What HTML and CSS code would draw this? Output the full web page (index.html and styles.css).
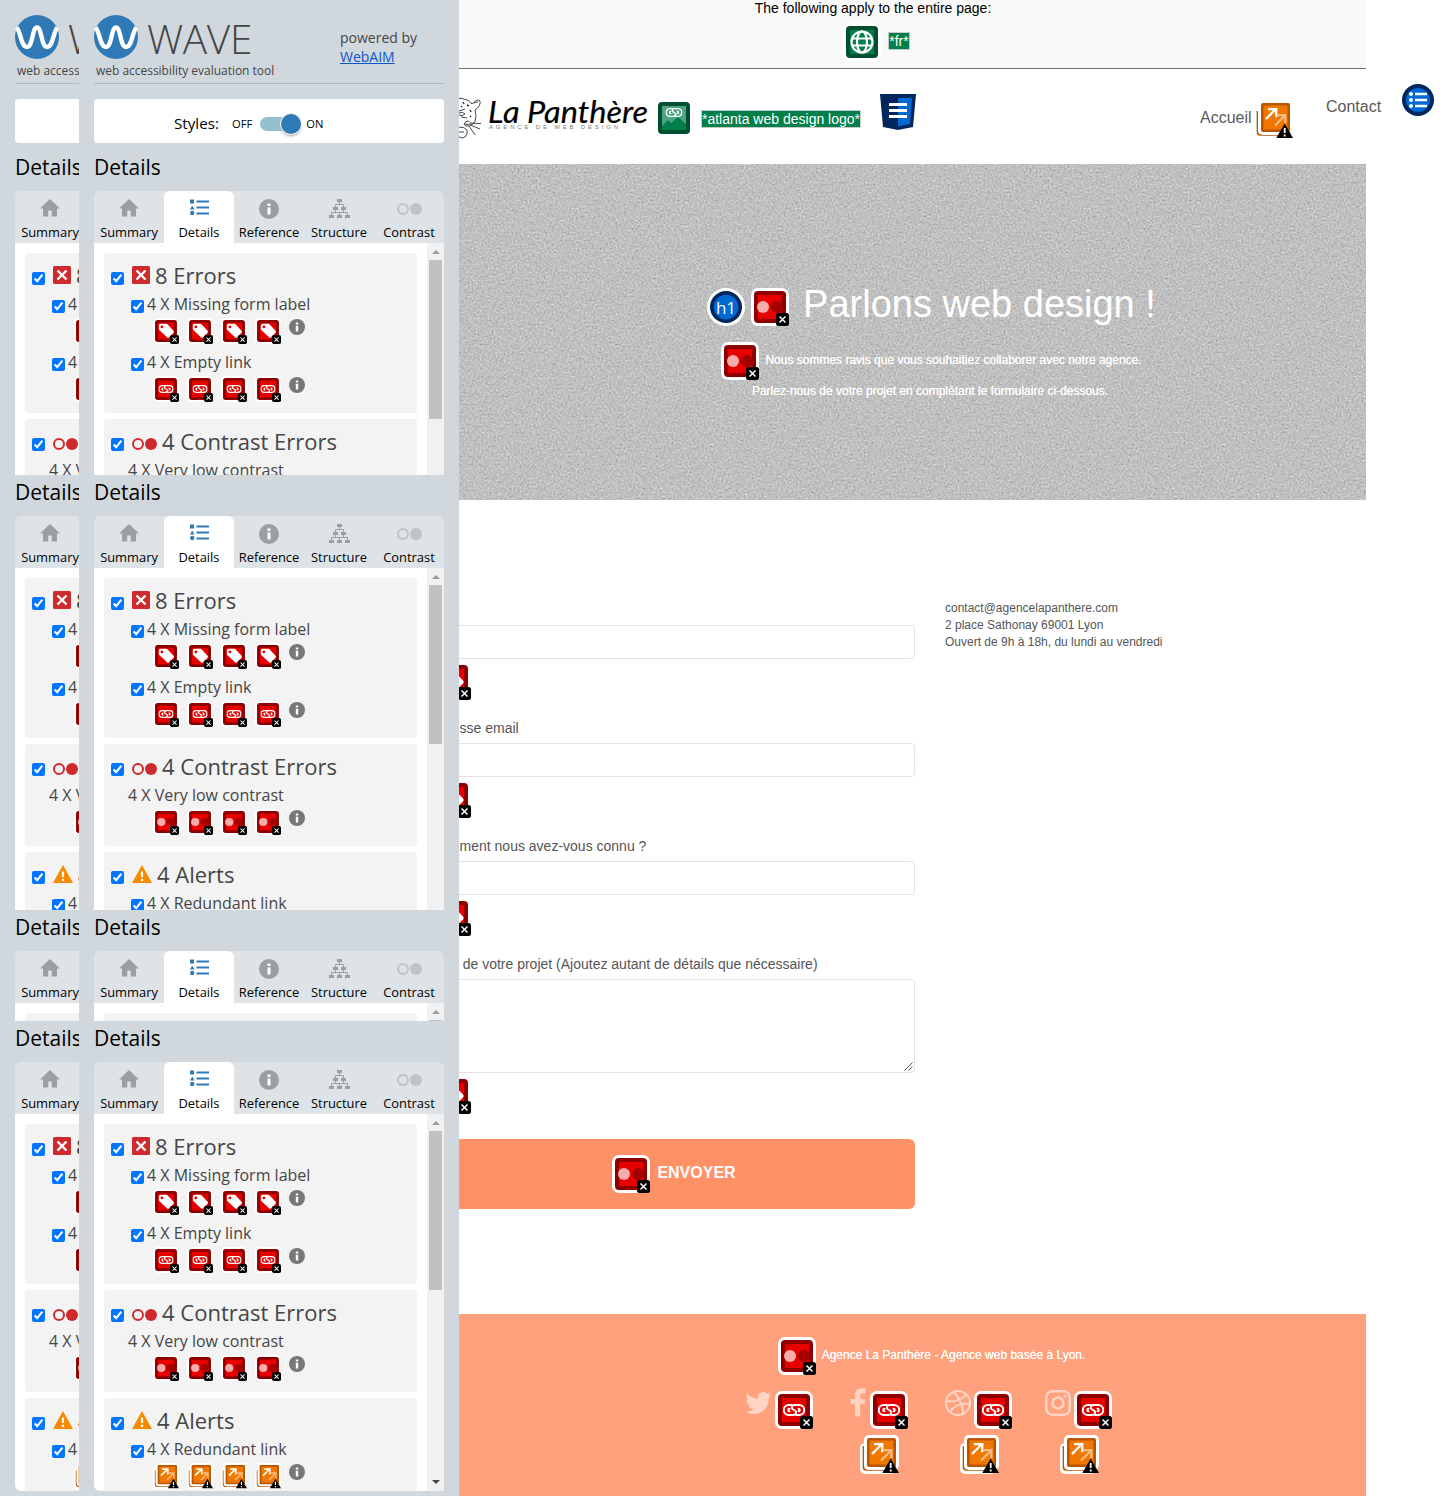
FILE: index.html
```html
<!DOCTYPE html>
<html lang="fr">
<head>
<meta charset="utf-8">
<title>La Panthère - Contact</title>
<link rel="stylesheet" href="styles.css">
</head>
<body>
<svg class="sprite" xmlns="http://www.w3.org/2000/svg">
  <symbol id="badge" viewBox="0 0 38 38">
    <rect x="25" y="25" width="13" height="13" rx="2.5" fill="#000"/>
    <path d="M28.5 28.5l6 6M34.5 28.5l-6 6" stroke="#fff" stroke-width="1.5"/>
  </symbol>
  <symbol id="red" viewBox="0 0 38 38">
    <rect width="38" height="38" rx="7" fill="#fff"/>
    <rect x="3" y="3" width="32" height="32" rx="4" fill="#8e0000"/>
    <rect x="7" y="7" width="24" height="24" fill="#e60000"/>
  </symbol>
  <symbol id="contrast" viewBox="0 0 38 38">
    <use href="#red"/>
    <circle cx="12" cy="19" r="6" fill="#f8abab"/><circle cx="26" cy="19" r="6" fill="#a40000"/>
    <use href="#badge"/>
  </symbol>
  <symbol id="chain" viewBox="0 0 22 14">
    <path d="M9 2H5.800a5 5 0 0 0 0 10H10.500a2.500 2.500 0 0 0 1.800-4.300L9.700 6.300A2.500 2.500 0 0 1 11.500 2H16.200a5 5 0 0 1 0 10H13M6.500 8.300a1.300 1.300 0 0 1 0-2.600M15.500 5.700a1.300 1.300 0 0 1 0 2.600" fill="none" stroke="#fff" stroke-width="1.900" stroke-linecap="round"/>
  </symbol>
  <symbol id="emptylink" viewBox="0 0 38 38">
    <use href="#red"/><use href="#chain" x="8" y="12" width="22" height="14"/><use href="#badge"/>
  </symbol>
  <symbol id="label" viewBox="0 0 38 38">
    <use href="#red"/>
    <path d="M8.500 11.500a3 3 0 0 1 3-3h7.500q1.500 0 2.500 1L30 18.500q1.500 1.500 0 3L23.500 28q-1.500 1.500-3 0L9.500 18q-1-1-1-2.500z" fill="#fff"/>
    <circle cx="13" cy="13" r="2" fill="#e60000"/><use href="#badge"/>
  </symbol>
  <symbol id="redundant" viewBox="0 0 39 39">
    <rect y="8" width="36" height="31" rx="5" fill="#fff"/>
    <path d="M3.500 11v21q0 3 3 3H31" fill="none" stroke="#b85600" stroke-width="1.700"/>
    <rect x="4" width="35" height="35" rx="5" fill="#fff"/>
    <path d="M5 5v25q0 4 4 4h20" fill="none" stroke="#fff" stroke-width="1"/>
    <rect x="7" y="3" width="29" height="29" rx="2" fill="#b85600"/>
    <rect x="9.500" y="5.500" width="24" height="24" fill="#f07800"/>
    <path d="M12 19l9.500-9.500M14 9.200h8.300v8" fill="none" stroke="#fff" stroke-width="2.300"/>
    <path d="M21 25.500l9.500-9.500M23 15.200h8.300v8" fill="none" stroke="#f8b980" stroke-width="2.300"/>
    <path d="M30.700 23.500L39 38H22.300z" fill="#000"/><path d="M30.700 28v5M30.700 34.500v2" stroke="#fff" stroke-width="1.800"/>
  </symbol>
  <symbol id="logo" viewBox="0 0 44 44">
    <circle cx="22" cy="22" r="22" fill="#2f79b7"/>
    <path d="M1.800 12.500C6 18 6 32 12 32S17 12.500 22 12.500s4 19.500 10 19.500S38 18 42.200 12.500" fill="none" stroke="#fff" stroke-width="4.400"/>
  </symbol>
  <symbol id="home" viewBox="0 0 20 18"><path d="M10 0L20 9.500h-3V17.500h-5.200V11.500H8.200v6H3v-8H0z" fill="#9b9fa1"/></symbol>
  <symbol id="list" viewBox="0 0 19 17">
    <path d="M0 .5h4v4H0zM2.200 6.500l2.300 4H0z" fill="#2f79b7"/>
    <path d="M6.500 2.500H19M6.500 8.500H19M6.500 14.500H19" stroke="#2f79b7" stroke-width="2"/><circle cx="2.200" cy="14" r="2.200" fill="#2f79b7"/>
  </symbol>
  <symbol id="info" viewBox="0 0 20 20"><circle cx="10" cy="10" r="10" fill="currentColor"/><path d="M8.500 4.500h3v2.500h-3zM8.500 8.500h3V15.500h-3z" fill="#fff"/></symbol>
  <symbol id="tree" viewBox="0 0 21 19">
    <path d="M8 0h5v3H8zM4 8h5v3H4zM12 8h5v3h-5zM0 16h5v3H0zM8 16h5v3H8zM16 16h5v3h-5z" fill="#9b9fa1"/>
    <path d="M10.500 3v2.500M6.500 8V5.500h8V8M6.500 11v2.500M14.500 11v2.500M2.500 16v-2.500h16V16M10.500 16v-2.500" fill="none" stroke="#9b9fa1"/>
  </symbol>
  <symbol id="pair" viewBox="0 0 25 12"><circle cx="6" cy="6" r="5" fill="none" stroke="currentColor" stroke-width="2"/><circle cx="19" cy="6" r="6" fill="currentColor"/></symbol>
  <symbol id="error" viewBox="0 0 18 18"><rect width="18" height="18" rx="1.500" fill="#ce2a2d"/><path d="M4.500 4.500l9 9M13.500 4.500l-9 9" stroke="#fff" stroke-width="2.400"/></symbol>
  <symbol id="alert" viewBox="0 0 20 18"><path d="M10 0l10 18H0z" fill="#f88a00"/><path d="M10 6.500V12M10 13.800v2.200" stroke="#fff" stroke-width="2.200"/></symbol>
</svg>

<template id="report">
  <h2 class="title">Details</h2>
  <div class="tabs">
    <div class="tab home"><span><svg width="20" height="18"><use href="#home"/></svg></span>Summary</div>
    <div class="tab on"><span><svg width="19" height="17"><use href="#list"/></svg></span>Details</div>
    <div class="tab"><span><svg width="20" height="20"><use href="#info"/></svg></span>Reference</div>
    <div class="tab"><span><svg width="21" height="19"><use href="#tree"/></svg></span>Structure</div>
    <div class="tab pale"><span><svg width="25" height="12"><use href="#pair"/></svg></span>Contrast</div>
  </div>
  <div class="pane">
    <div class="groups">
      <section class="card">
        <h3><input type="checkbox" checked><svg width="18" height="18"><use href="#error"/></svg><span>8 Errors</span></h3>
        <div class="item" data-icon="label"><label><input type="checkbox" checked>4 X Missing form label</label></div>
        <div class="item" data-icon="emptylink"><label><input type="checkbox" checked>4 X Empty link</label></div>
      </section>
      <section class="card">
        <h3><input type="checkbox" checked><svg class="crimson" width="25" height="12"><use href="#pair"/></svg><span>4 Contrast Errors</span></h3>
        <div class="item" data-icon="contrast"><label class="plain">4 X Very low contrast</label></div>
      </section>
      <section class="card">
        <h3><input type="checkbox" checked><svg class="warn" width="20" height="18"><use href="#alert"/></svg><span>4 Alerts</span></h3>
        <div class="item" data-icon="redundant"><label><input type="checkbox" checked>4 X Redundant link</label></div>
      </section>
    </div>
    <div class="scroll"><i class="up"></i><i class="thumb"></i><i class="down"></i></div>
  </div>
</template>

<template id="masthead">
  <header class="brand">
    <div>
      <div class="wordmark"><svg width="44" height="44"><use href="#logo"/></svg><span>WAVE</span></div>
      <p class="tagline">web accessibility evaluation tool</p>
    </div>
    <p class="powered">powered by<br><a href="#">WebAIM</a></p>
  </header>
  <div class="styles"><b>Styles:</b><span>OFF</span><i class="switch"></i><span>ON</span></div>
</template>

<div class="screen">
  <aside class="side cut"></aside>
  <aside class="side"></aside>

  <main class="page">
    <div class="notice">
      <p>The following apply to the entire page:</p>
      <div class="notice-row">
        <svg width="38" height="38" viewBox="0 0 38 38"><rect width="38" height="38" rx="7" fill="#fff"/><rect x="3" y="3" width="32" height="32" rx="4" fill="#00502d"/><rect x="7" y="7" width="24" height="24" fill="#007f4b"/><g fill="none" stroke="#fff" stroke-width="2.200"><circle cx="19" cy="19" r="10.500"/><ellipse cx="19" cy="19" rx="5" ry="10.500"/><path d="M10 15.500h18M10 22.500h18"/></g></svg>
        <span class="alt">*fr*</span>
      </div>
    </div>

    <nav class="nav">
      <svg class="brandmark" width="208" height="50" viewBox="0 0 208 50">
        <g fill="none" stroke="#333" stroke-width=".9"><path d="M14 8q6-2 12 1 3 1 5 4 6-6 8-3 1 5-5 9 2 6 0 11-1 4-5 4l-5-1M33 12q3-1 4-1M18 20l6-2M18 22q4-2 6 1-3 3-6 1M20 26l6 1M28 30q-4 0-5 3 1 3 5 2M28 32l12 .5M29 34l10 4M28 35l6 9M18 36q6 0 8 3 1 4-2 7-2 2-6 0M16 41h7"/><path d="M22 11l1 2M26 14l2 1M20 15l1 1M29 19l1 2M29 25l1 1" stroke-width="1.400"/></g>
        <text class="script" x="47" y="32" textLength="160" lengthAdjust="spacingAndGlyphs">La Panthère</text>
        <text class="strap" x="48" y="38" textLength="129">AGENCE DE WEB DESIGN</text>
      </svg>
      <svg class="linked" width="32" height="32" viewBox="0 0 32 32"><rect width="32" height="32" rx="4" fill="#00502d"/><rect x="4" y="4" width="24" height="24" fill="#4da581"/><path d="M4 24l6-6 3 3 7-6 8 7v6H4z" fill="#007f4b"/><use href="#chain" x="7.500" y="5" width="17" height="11"/></svg>
      <span class="alt logo-alt">*atlanta web design logo*</span>
      <svg class="navmark" width="36" height="36" viewBox="0 0 36 36"><path d="M0 0h36l-3 33-15 3-15-3z" fill="#00265c"/><path d="M18 4h14l-2 26-12 2.500z" fill="#0069d2"/><path d="M9 10.500h18M9 16.500h18M9 22.500h18" stroke="#fff" stroke-width="3"/></svg>
      <a class="accueil">Accueil</a>
      <svg class="dup" width="39" height="39"><use href="#redundant"/></svg>
      <a class="contact">Contact</a>
      <svg class="ul" width="32" height="32" viewBox="0 0 32 32"><circle cx="16" cy="16" r="16" fill="#00265c"/><circle cx="16" cy="16" r="12" fill="#0069d2"/><path d="M13 10h12M13 16h12M13 22h12" stroke="#fff" stroke-width="2.500"/><g fill="#fff"><circle cx="9" cy="10" r="2"/><circle cx="9" cy="16" r="2"/><circle cx="9" cy="22" r="2"/></g></svg>
    </nav>

    <section class="hero">
      <svg class="paper" width="986" height="336"><filter id="grain" x="0" y="0" width="100%" height="100%" color-interpolation-filters="sRGB"><feTurbulence type="fractalNoise" baseFrequency=".5" numOctaves="3" seed="4"/><feColorMatrix values=".2 .15 .15 0 .5  .2 .15 .15 0 .5  .2 .15 .15 0 .5  0 0 0 0 1"/></filter><rect width="986" height="336" filter="url(#grain)"/></svg>
      <div class="headline">
        <svg width="38" height="38" viewBox="0 0 38 38"><circle cx="19" cy="19" r="19" fill="#fff"/><circle cx="19" cy="19" r="16" fill="#00265c"/><circle cx="19" cy="19" r="12.300" fill="#0069d2"/><text x="19" y="25.500" text-anchor="middle" class="h1mark">h1</text></svg>
        <svg width="38" height="38"><use href="#contrast"/></svg>
        <h1>Parlons web design !</h1>
      </div>
      <div class="lead"><svg width="38" height="38"><use href="#contrast"/></svg><p>Nous sommes ravis que vous souhaitiez collaborer avec notre agence.</p></div>
      <p class="lead2">Parlez-nous de votre projet en complétant le formulaire ci-dessous.</p>
    </section>

    <section class="body">
      <form class="form">
        <div class="field"><label>Nom</label><div class="box"></div><svg width="38" height="38"><use href="#label"/></svg></div>
        <div class="field"><label>Adresse email</label><div class="box"></div><svg width="38" height="38"><use href="#label"/></svg></div>
        <div class="field"><label>Comment nous avez-vous connu ?</label><div class="box"></div><svg width="38" height="38"><use href="#label"/></svg></div>
        <div class="field tall"><label>Brief de votre projet (Ajoutez autant de détails que nécessaire)</label><div class="box"><svg width="9" height="9" viewBox="0 0 9 9"><path d="M.5 8.500l8-8M4.500 8.500l4-4" stroke="#555" fill="none"/></svg></div><svg width="38" height="38"><use href="#label"/></svg></div>
        <div class="send"><svg width="38" height="38"><use href="#contrast"/></svg><b>ENVOYER</b></div>
      </form>
      <address>contact@agencelapanthere.com<br>2 place Sathonay 69001 Lyon<br>Ouvert de 9h à 18h, du lundi au vendredi</address>
    </section>

    <footer class="foot">
      <div class="credit"><svg width="38" height="38"><use href="#contrast"/></svg><p>Agence La Panthère - Agence web basée à Lyon.</p></div>
      <div class="social">
        <div class="net"><div><svg width="27" height="27" viewBox="0 0 27 27"><path d="M26.500 5.500l-2.800 2.300C24 17 18 24 9.500 24 6 24 3 23 .5 21.500c3 .2 5.700-.6 7.800-2.300-2.600-.2-4.300-1.600-5-3.700h2.300C3 14.700 1.300 12.800 1.300 10l2.400.6C1.500 8.800.8 6 2.200 3.300 5 6.600 8.700 8.600 13.300 8.800 12.500 5 15 2 18.300 2c1.700 0 3 .7 4 1.700l3.300-1.300-2.200 3z" fill="#ffd4c4"/></svg><svg width="38" height="38"><use href="#emptylink"/></svg></div></div>
        <div class="net fb"><div><svg width="16" height="29" viewBox="0 0 16 29"><path d="M15.500.3v5h-3q-2.300 0-2.300 2.200V11h5l-.7 4.700h-4.300V28.500H5V15.700H.5V11H5V7Q5 .2 11.500.2z" fill="#ffd4c4"/></svg><svg width="38" height="38"><use href="#emptylink"/></svg></div><svg width="39" height="39"><use href="#redundant"/></svg></div>
        <div class="net"><div><svg width="26" height="26" viewBox="0 0 26 26"><g fill="none" stroke="#ffd4c4" stroke-width="2"><circle cx="13" cy="13" r="12"/><path d="M9 2q9 10 9 22M1 11.500q14 1 20-7M5 22q6-10 20-8"/></g></svg><svg width="38" height="38"><use href="#emptylink"/></svg></div><svg width="39" height="39"><use href="#redundant"/></svg></div>
        <div class="net"><div><svg width="26" height="26" viewBox="0 0 26 26"><g fill="none" stroke="#ffd4c4" stroke-width="2.500"><rect x="1.300" y="1.300" width="23.400" height="23.400" rx="6"/><circle cx="13" cy="13" r="5.500"/></g><circle cx="20" cy="6" r="1.600" fill="#ffd4c4"/></svg><svg width="38" height="38"><use href="#emptylink"/></svg></div><svg width="39" height="39"><use href="#redundant"/></svg></div>
      </div>
    </footer>
  </main>
</div>
<script src="script.js"></script>
</body>
</html>
```
FILE: styles.css
```css
* { box-sizing: border-box; }
body { margin: 0; background: #fff; overflow: hidden; font-family: "Liberation Sans", Arial, sans-serif; }
p, h1, h2, h3 { margin: 0; font-weight: 400; }
svg { display: block; flex: none; }
.sprite { width: 0; height: 0; position: absolute; }
.screen { display: flex; width: 1445px; height: 1496px; }

/* Report sidebar */
.side { flex: none; width: 380px; height: 1496px; background: #d0d8de; position: relative; z-index: 2; overflow: hidden; font-family: "Open Sans", "Noto Sans", sans-serif; }
.side.cut { width: 79px; }
.strip { width: 380px; padding: 0 15px; overflow: hidden; display: flex; flex-direction: column; }
.strip.first { height: 475px; }
.strip.second { height: 435px; }
.strip.third { height: 111px; }
.strip.last { height: 475px; padding-bottom: 5px; }
.brand { flex: none; height: 84px; padding-top: 15px; border-bottom: 1px solid #b0b9bc; display: flex; justify-content: space-between; color: #454545; }
.wordmark { display: flex; gap: 9px; height: 48px; }
.wordmark span { font-size: 40.500px; font-weight: 300; line-height: 47px; letter-spacing: -.3px; }
.tagline { font-size: 11.960px; line-height: 16px; margin-left: 2px; white-space: nowrap; }
.powered { width: 104px; font-size: 14px; line-height: 19px; padding-top: 13px; }
.powered a { color: #0f55cc; }
.styles { flex: none; height: 44px; margin: 15px 0 7px; padding: 5px 0 0 80px; background: #fff; border-radius: 4px; display: flex; align-items: center; color: #000; }
.styles b { font-weight: 400; font-size: 15.200px; width: 58px; margin-top: -1px; }
.styles span { font-size: 11.200px; }
.switch { width: 41px; height: 14px; border-radius: 7px; background: #92c1cd; margin: 0 5px 0 8px; display: flex; align-items: center; justify-content: flex-end; }
.switch::after { content: ""; width: 20px; height: 20px; border-radius: 50%; background: #2f79b7; box-shadow: 0 0 0 1px #eee, 0 2px 3px #999; }
.title { flex: none; height: 41px; font-size: 21px; line-height: 35px; color: #000; }
.tabs { flex: none; display: flex; height: 52px; background: #dee3e7; border-radius: 6px 6px 0 0; color: #000; font-size: 12.900px; line-height: 18px; text-align: center; }
.tab { width: 70px; color: #000; white-space: nowrap; }
.tab span { height: 32px; padding-top: 3px; display: flex; align-items: center; justify-content: center; color: #9b9fa1; }
.tab.on { background: #fff; border-radius: 6px 6px 0 0; }
.tab.on span { padding-top: 0; }
.tab.home span { padding-top: 2px; }
.pale span { color: #bfc3c6; padding-top: 4px; }
.pane { flex: 0 0 382px; display: flex; background: #fff; overflow: hidden; }
.last .pane { flex-basis: 377px; border-radius: 0 0 0 6px; }
.groups { width: 333px; padding: 10px 10px 0; display: flex; flex-direction: column; gap: 6px; }
.card { flex: none; background: #f3f3f3; border-radius: 4px; padding: 8px 0 4px; color: #454545; }
.card h3 { height: 32px; display: flex; align-items: center; font-size: 22px; line-height: 30px; padding-left: 7px; }
.card h3 span { margin-top: -4px; }
.card h3 svg { margin: -4px 5px 0 8px; }
.card h3 svg.crimson { color: #ce2a2d; margin-top: 2px; }
.card input { appearance: auto; margin: 0; width: 13px; height: 13px; flex: none; }
.card h3 input { margin-top: 3px; }
.item { height: 58px; }
.item label { display: flex; align-items: center; height: 22px; gap: 3px; padding-left: 27px; font-size: 16px; line-height: 22px; }
.item label.plain { padding-left: 24px; }
.item input { margin-top: 5px; }
.icons { display: flex; gap: 8px; padding: 3px 0 0 49px; }
.icons .about { color: #777; margin: 1px 0 0 0; }
.scroll { width: 17px; background: #f1f1f1; display: flex; flex-direction: column; align-items: center; }
.up { margin-top: 7px; border: 4px solid transparent; border-top: 0; border-bottom-color: #9d9d9d; }
.thumb { width: 13px; height: 159px; background: #c1c1c1; margin-top: 6px; }
.down { display: none; margin: auto 0 7px; border: 4px solid transparent; border-bottom: 0; border-top-color: #444; }
.last .down { display: block; }

/* Site: runs on beneath the sidebar */
.page { flex: none; width: 986px; margin-left: -79px; height: 1496px; display: flex; flex-direction: column; color: #555; }
.notice { flex: none; height: 69px; background: #f9f9f9; border-bottom: 1px solid #6c756c; color: #000; text-align: center; font-size: 14px; line-height: 16px; }
.notice-row { display: flex; justify-content: center; gap: 7px; padding-top: 7px; margin-left: 7px; }
.alt { height: 18px; border: 1px solid #c5ccc8; background: #007f4b; color: #fff; font-size: 14px; line-height: 16px; white-space: nowrap; }
.notice .alt { margin-top: 9px; width: 22px; }
.nav { flex: none; width: 1065px; height: 95px; padding-left: 61px; display: flex; align-items: flex-start; }
.brandmark { margin-top: 22px; }
.script { font: italic 400 30px Lato, sans-serif; fill: #000; stroke: #000; stroke-width: .2px; }
.strap { font: 6px "Liberation Sans", sans-serif; fill: #777; }
.linked { margin: 33px 0 0 9px; }
.logo-alt { margin: 41px 0 0 11px; width: 160px; }
.navmark { margin: 25px 0 0 19px; }
.nav a { font-size: 16px; line-height: 18px; color: #5a5a5a; }
.accueil { margin: 40px 0 0 284px; width: 54px; }
.dup { margin-top: 31px; }
.contact { margin: 29px 0 0 33px; width: 76px; }
.ul { margin-top: 15px; }
.hero { flex: none; height: 336px; position: relative; color: #fff; background: #bdbdbd; padding-top: 121px; display: flex; flex-direction: column; align-items: center; }
.paper { position: absolute; left: 0; top: 0; }
.headline, .lead, .lead2 { position: relative; }
.headline { display: flex; gap: 6px; height: 55px; padding-top: 3px; margin-left: 117px; }
.headline h1 { font-size: 38px; line-height: 38px; margin: -3px 0 0 8px; white-space: nowrap; }
.h1mark { font: 17px "Open Sans", sans-serif; fill: #fff; }
.lead { display: flex; align-items: center; gap: 6px; height: 42px; margin-left: 117px; }
.lead p, .lead2 { font-size: 12px; line-height: 16px; white-space: nowrap; text-shadow: 0 0 .5px #fff; }
.lead p { margin-top: -2px; }
.lead2 { margin: 1px 0 0 114px; }
.body { flex: none; height: 814px; padding: 101px 0 0 50px; display: flex; gap: 30px; color: #555; }
.form { width: 485px; }
.field { height: 118px; font-size: 14px; line-height: 18px; }
.field label { display: block; height: 24px; }
.field > svg { margin: 3px 0 0 3px; }
.box { height: 34px; border: 1px solid #e2e2e2; border-radius: 4px; }
.tall { height: 184px; }
.tall .box { height: 94px; display: flex; align-items: flex-end; justify-content: flex-end; padding: 1px; }
.send { height: 70px; background: #ff9166; border-radius: 6px; display: flex; justify-content: center; padding: 16px 0 0 3px; gap: 7px; color: #fff; font-size: 16px; line-height: 36px; }
address { font-style: normal; font-size: 12px; line-height: 17px; margin-top: -1px; white-space: nowrap; }
.foot { flex: none; height: 182px; background: #ffa17d; padding-top: 23px; }
.credit { display: flex; justify-content: center; gap: 6px; height: 54px; margin-left: 117px; color: #fff; font-size: 12px; line-height: 36px; text-shadow: 0 0 .5px #fff; }
.social { display: flex; margin-left: 348.500px; }
.net { width: 100px; display: flex; flex-direction: column; align-items: center; gap: 6px; }
.net > svg { margin-left: 1px; }
.net div { display: flex; gap: 3px; }
.net div > svg:first-child { margin-top: -1px; }
.fb div { gap: 4px; }
.fb div > svg:first-child { margin-top: -3px; }
```
FILE: script.js
```js
// Each sidebar is a stack of strips that show the same report at different heights.
const sized = (id, size) => `<svg width="${size}" height="${size}"><use href="#${id}"/></svg>`;

document.querySelectorAll('.side').forEach(side => {
  ['first', 'second', 'third', 'last'].forEach(name => {
    const strip = document.createElement('div');
    strip.className = `strip ${name}`;
    if (name === 'first') strip.append(document.getElementById('masthead').content.cloneNode(true));
    strip.append(document.getElementById('report').content.cloneNode(true));
    side.append(strip);
  });
});

document.querySelectorAll('.item').forEach(item => {
  const row = document.createElement('div');
  row.className = 'icons';
  row.innerHTML = sized(item.dataset.icon, 26).repeat(4) +
    '<svg class="about" width="16" height="16"><use href="#info"/></svg>';
  item.append(row);
});
```
